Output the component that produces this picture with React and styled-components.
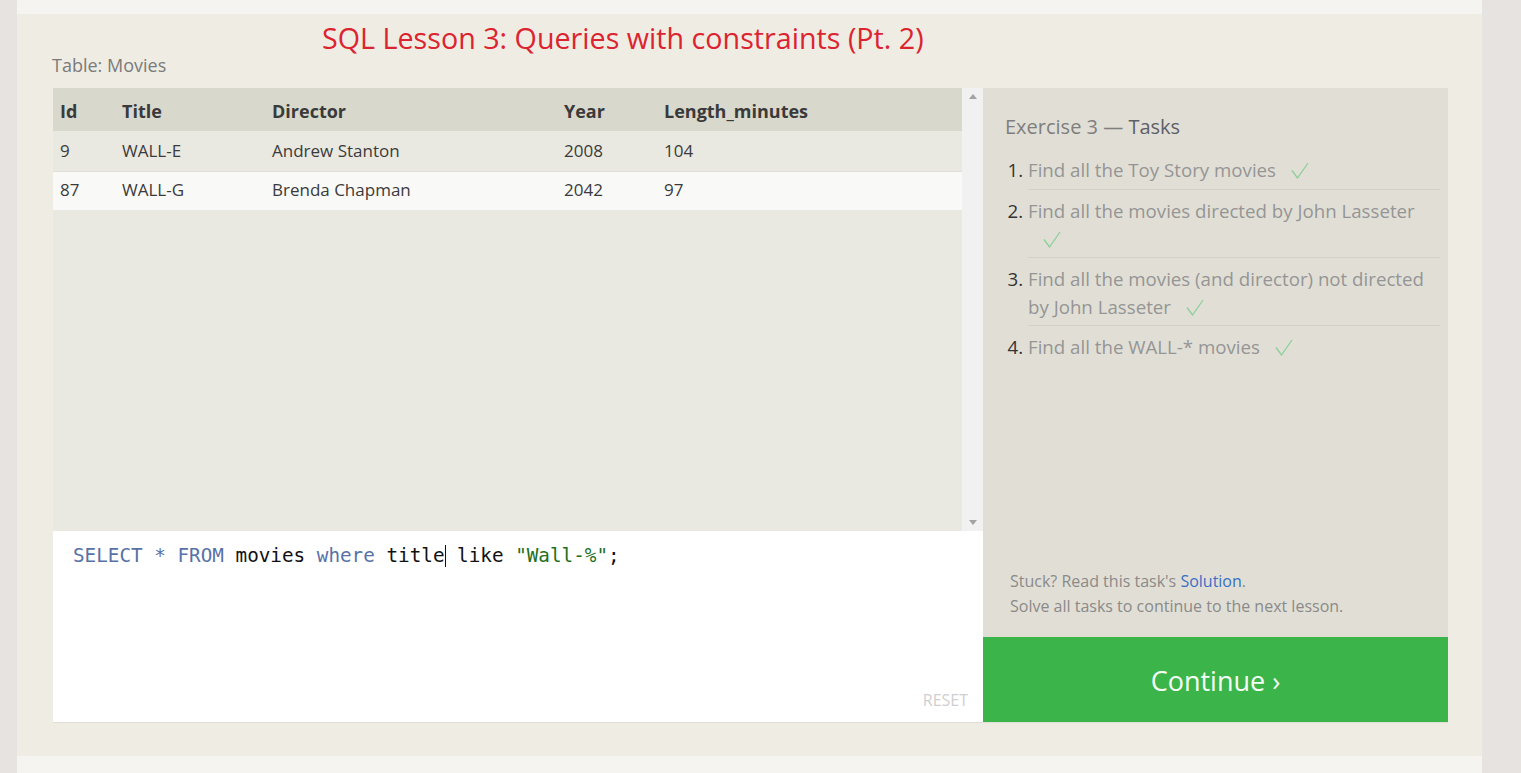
import React from 'react';
import styled, { createGlobalStyle } from 'styled-components';

const movies = [
  { id: 9, title: 'WALL-E', director: 'Andrew Stanton', year: 2008, length: 104 },
  { id: 87, title: 'WALL-G', director: 'Brenda Chapman', year: 2042, length: 97 },
];

const tasks = [
  'Find all the Toy Story movies',
  'Find all the movies directed by John Lasseter',
  'Find all the movies (and director) not directed by John Lasseter',
  'Find all the WALL-* movies',
];

const Check = () => (
  <CheckMark viewBox="0 0 18 17" width="18" height="17">
    <polyline points="1,8.5 6.5,16 17,1" fill="none" stroke="#8ccf9b" strokeWidth="1.3" />
  </CheckMark>
);

const App = () => {
  return (
    <>
      <GlobalStyle />
      <Page>
        <LessonPanel>
          {/* Header */}
          <LessonTitle>SQL Lesson 3: Queries with constraints (Pt. 2)</LessonTitle>
          <TableLabel>Table: Movies</TableLabel>

          <Workspace>
            <LeftColumn>
              <TableBox>
                <TableScroll>
                  <Table>
                    <colgroup>
                      <col style={{ width: 62 }} />
                      <col style={{ width: 150 }} />
                      <col style={{ width: 292 }} />
                      <col style={{ width: 100 }} />
                      <col />
                    </colgroup>
                    <thead>
                      <tr>
                        <Th>Id</Th>
                        <Th>Title</Th>
                        <Th>Director</Th>
                        <Th>Year</Th>
                        <Th>Length_minutes</Th>
                      </tr>
                    </thead>
                    <tbody>
                      {movies.map((m) => (
                        <Row key={m.id}>
                          <Td>{m.id}</Td>
                          <Td>{m.title}</Td>
                          <Td>{m.director}</Td>
                          <Td>{m.year}</Td>
                          <Td>{m.length}</Td>
                        </Row>
                      ))}
                    </tbody>
                  </Table>
                </TableScroll>
                <Scrollbar>
                  <Arrow $up />
                  <Arrow />
                </Scrollbar>
              </TableBox>

              <Editor>
                <CodeLine>
                  <Kw>SELECT</Kw> <Kw>*</Kw> <Kw>FROM</Kw> movies <Kw>where</Kw> title<Caret />{' '}
                  like <Str>"Wall-%"</Str>;
                </CodeLine>
                <ResetButton>RESET</ResetButton>
              </Editor>
            </LeftColumn>

            <RightColumn>
              <TasksPanel>
                <TasksHeading>
                  Exercise 3 — <strong>Tasks</strong>
                </TasksHeading>
                <TaskList>
                  {tasks.map((t) => (
                    <TaskItem key={t}>
                      {t}
                      <Check />
                    </TaskItem>
                  ))}
                </TaskList>
                <Footer>
                  <p>
                    Stuck? Read this task's <SolutionLink href="#">Solution</SolutionLink>.
                  </p>
                  <p>Solve all tasks to continue to the next lesson.</p>
                </Footer>
              </TasksPanel>
              <ContinueButton>Continue ›</ContinueButton>
            </RightColumn>
          </Workspace>
        </LessonPanel>
      </Page>
    </>
  );
};

const GlobalStyle = createGlobalStyle`
  body {
    margin: 0;
    background-color: #e7e3e0;
    font-family: "Open Sans", "Liberation Sans", sans-serif;
  }
  * {
    box-sizing: border-box;
  }
`;

const Page = styled.div`
  margin-left: 17px;
  width: 1465px;
  height: 773px;
  padding: 14px 0 17px;
  background-color: #f5f4f0;
`;

const LessonPanel = styled.section`
  height: 742px;
  padding: 8px 34px 0 35px;
  background-color: #efece4;
  display: flex;
  flex-direction: column;
`;

const LessonTitle = styled.h1`
  margin: 0 0 0 270px;
  height: 31px;
  font-size: 28.7px;
  line-height: 31px;
  font-weight: 400;
  letter-spacing: 0;
  color: #dc2430;
`;

const TableLabel = styled.div`
  height: 24px;
  margin-bottom: 11px;
  font-size: 18px;
  line-height: 24px;
  color: #7b7b7b;
`;

const Workspace = styled.div`
  display: grid;
  grid-template-columns: 930px 465px;
  height: 634px;
  margin-left: 1px;
  box-shadow: 0 1px 0 #e0ded6;
`;

const LeftColumn = styled.div`
  display: flex;
  flex-direction: column;
`;

const TableBox = styled.div`
  display: flex;
  height: 443px;
  background-color: #eae9e1;
`;

const TableScroll = styled.div`
  flex: 1;
  overflow: hidden;
`;

const Table = styled.table`
  width: 100%;
  border-collapse: collapse;
  table-layout: fixed;
  color: #333;
`;

const Th = styled.th`
  height: 43px;
  padding: 2px 0 0 7px;
  text-align: left;
  font-size: 18px;
  font-weight: 700;
  background-color: #d9d8cd;
  color: #3a3a3a;
`;

const Row = styled.tr`
  height: 40px;
  &:nth-child(even) {
    height: 39px;
    background-color: #f9f9f8;
    border-top: 1px solid #e1e0d8;
  }
`;

const Td = styled.td`
  padding: 0 0 0 7px;
  font-size: 17px;
  color: #3b3b3b;
  tr:nth-child(even) > & {
    padding-bottom: 2px;
  }
`;

const Scrollbar = styled.div`
  width: 21px;
  background-color: #f1f1f1;
  display: flex;
  flex-direction: column;
  justify-content: space-between;
  align-items: center;
  padding: 6px 0 6px 0;
`;

const Arrow = styled.div`
  width: 0;
  height: 0;
  border-left: 4px solid transparent;
  border-right: 4px solid transparent;
  ${({ $up }) =>
    $up ? 'border-bottom: 5px solid #a3a3a3;' : 'border-top: 5px solid #a3a3a3;'}
`;

const Editor = styled.div`
  flex: 1;
  display: flex;
  flex-direction: column;
  justify-content: space-between;
  padding: 13px 15px 12px 20px;
  background-color: #ffffff;
`;

const CodeLine = styled.div`
  font-family: "DejaVu Sans Mono", "Liberation Mono", monospace;
  font-size: 19.3px;
  line-height: 24px;
  color: #111;
  white-space: pre;
`;

const Kw = styled.span`
  color: #5871a6;
`;

const Str = styled.span`
  color: #226f22;
`;

const Caret = styled.span`
  display: inline-block;
  width: 0;
  height: 22px;
  vertical-align: -5px;
  border-left: 1.5px solid #111;
`;

const ResetButton = styled.div`
  align-self: flex-end;
  font-size: 16px;
  line-height: 20px;
  color: #cfcfcf;
`;

const RightColumn = styled.div`
  display: flex;
  flex-direction: column;
`;

const TasksPanel = styled.div`
  flex: 1;
  display: flex;
  flex-direction: column;
  padding: 25px 8px 18px 22px;
  background-color: #e1dfd5;
`;

const TasksHeading = styled.h2`
  margin: 0 0 9px;
  font-size: 20px;
  line-height: 28px;
  font-weight: 400;
  color: #7e7e7e;

  strong {
    font-weight: 400;
    color: #5d6068;
  }
`;

const TaskList = styled.ol`
  margin: 0;
  padding-left: 23px;
`;

const TaskItem = styled.li`
  padding: 7px 0 4px;
  font-size: 18.7px;
  line-height: 28px;
  color: #959595;
  border-bottom: 1px solid #d4d2c8;

  &:first-child {
    padding-top: 6px;
    padding-bottom: 5px;
  }

  &:last-child {
    border-bottom: none;
  }

  &::marker {
    color: #333;
  }
`;

const CheckMark = styled.svg`
  margin-left: 15px;
  vertical-align: -2px;
`;

const Footer = styled.div`
  margin-top: auto;
  padding-left: 5px;
  font-size: 16px;
  line-height: 25px;
  color: #8a8a8a;

  p {
    margin: 0;
  }
`;

const SolutionLink = styled.a`
  color: #3a6fc6;
  text-decoration: none;
`;

const ContinueButton = styled.button`
  height: 85px;
  padding-top: 2px;
  border: none;
  background-color: #3bb54a;
  color: #f6fff6;
  font-family: "Open Sans", "Liberation Sans", sans-serif;
  font-size: 27px;
  cursor: pointer;
`;

export default App;
